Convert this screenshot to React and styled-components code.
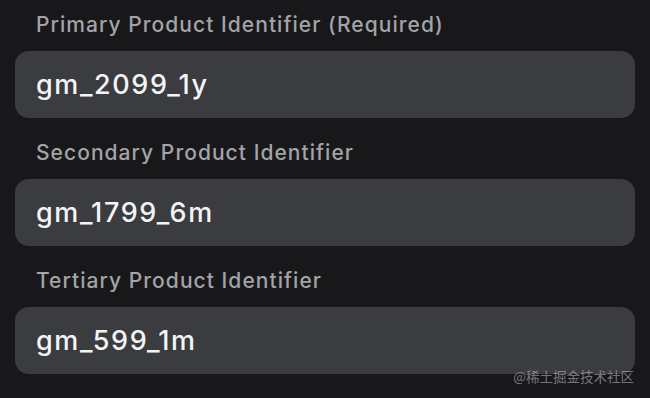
import React from "react";
import styled, { createGlobalStyle } from "styled-components";

const GlobalStyle = createGlobalStyle`
  html, body {
    margin: 0;
    padding: 0;
    background: #18181b;
  }
  body {
    font-family: Inter, "Noto Sans", sans-serif;
  }
`;

const Page = styled.div`
  position: relative;
  width: 650px;
  height: 398px;
  box-sizing: border-box;
  padding: 11px 15px 0;
  display: flex;
  flex-direction: column;
  gap: 21px;
  overflow: hidden;
`;

const Field = styled.div`
  display: flex;
  flex-direction: column;
`;

const Label = styled.label`
  font-size: 21px;
  line-height: 28px;
  letter-spacing: 1.05px;
  color: #a3a3a8;
  padding-left: 21px;
  margin-bottom: 12px;
  font-weight: 450;
`;

const Input = styled.input`
  box-sizing: border-box;
  width: 100%;
  height: 67px;
  border: none;
  outline: none;
  border-radius: 14px;
  background: #3b3c40;
  padding: 0 21px;
  font-family: Inter, "Noto Sans", sans-serif;
  font-size: 27px;
  letter-spacing: 1.6px;
  font-weight: 500;
  color: #f4f4f5;
`;

const Watermark = styled.span`
  position: absolute;
  right: 16px;
  bottom: 12px;
  font-family: "Noto Sans CJK SC", sans-serif;
  font-size: 13.5px;
  color: rgba(200, 200, 205, 0.55);
`;

const fields = [
  { label: "Primary Product Identifier (Required)", value: "gm_2099_1y" },
  { label: "Secondary Product Identifier", value: "gm_1799_6m" },
  { label: "Tertiary Product Identifier", value: "gm_599_1m" },
];

export default function App() {
  return (
    <>
      <GlobalStyle />
      <Page>
        {fields.map((f) => (
          <Field key={f.value}>
            <Label>{f.label}</Label>
            <Input defaultValue={f.value} readOnly />
          </Field>
        ))}
        <Watermark>@稀土掘金技术社区</Watermark>
      </Page>
    </>
  );
}
